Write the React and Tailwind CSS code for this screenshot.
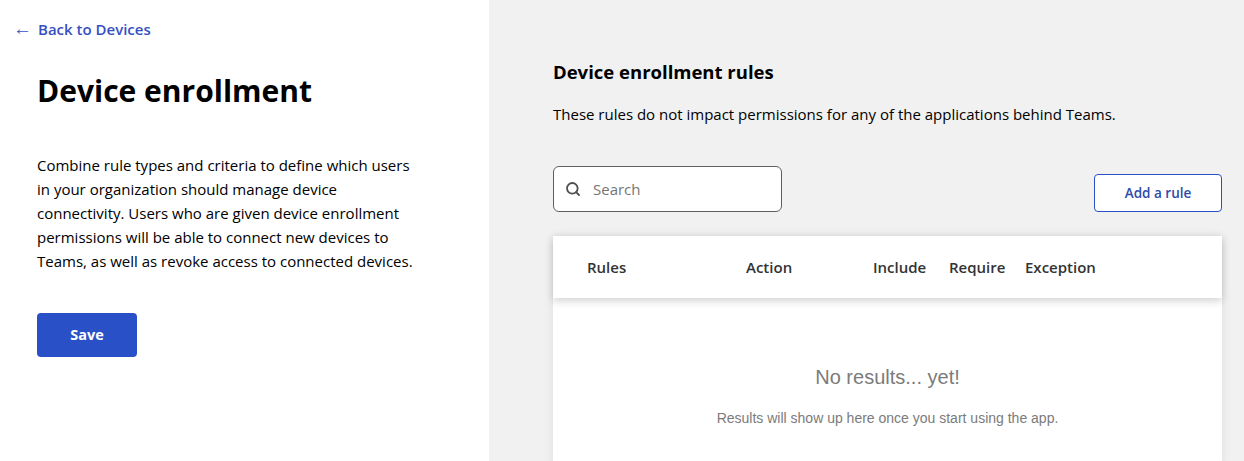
import React from "react";
import { Search } from "lucide-react";

const columns = [
  { name: "Rules", width: "w-[159px]" },
  { name: "Action", width: "w-[127px]" },
  { name: "Include", width: "w-[76px]" },
  { name: "Require", width: "w-[76px]" },
  { name: "Exception", width: "" },
];

const App = () => {
  return (
    <div className="flex h-[461px] overflow-hidden bg-white font-['Open_Sans','Noto_Sans',sans-serif] text-black">
      {/* left panel */}
      <div className="w-[489px] shrink-0 bg-white">
        <a className="flex items-center pl-[13px] pt-[19px] text-[15px] leading-[21px] font-semibold text-[#3650c4]">
          <span className="-mt-0.5 w-[25px] text-[19px] leading-[21px] font-normal">←</span>
          <span>Back to Devices</span>
        </a>
        <div className="pl-[37px]">
          <h1 className="mt-[28px] text-[30px] leading-[46px] font-bold">Device enrollment</h1>
          <p className="mt-[39px] w-[380px] text-[15px] leading-6">
            Combine rule types and criteria to define which users in your organization should manage device connectivity. Users who are given device enrollment permissions will be able to connect new devices to Teams, as well as revoke access to connected devices.
          </p>
          <button className="mt-[40px] h-11 w-[100px] rounded bg-[#2a50c8] text-[14.5px] font-bold text-white">Save</button>
        </div>
      </div>

      {/* right panel */}
      <div className="flex-1 bg-[#f1f1f1] pl-[64px] pr-[22px]">
        <h2 className="mt-[59px] text-[18.5px] leading-[26px] font-bold">Device enrollment rules</h2>
        <p className="mt-[19px] text-[15px] leading-[21px]">These rules do not impact permissions for any of the applications behind Teams.</p>

        <div className="mt-[41px] flex items-end justify-between">
          <div className="flex h-[46px] w-[229px] items-center rounded-md border border-[#5f5f5f] bg-white pl-[11px]">
            <Search size={16} strokeWidth={2.75} className="text-[#505050]" />
            <span className="ml-3 text-[15px] text-[#757575]">Search</span>
          </div>
          <button className="h-[38px] w-[128px] rounded border border-[#2a50c8] bg-white text-[13.5px] font-semibold text-[#2d4ba8]">Add a rule</button>
        </div>

        <div className="mt-6 bg-white shadow-[0_0_10px_rgba(0,0,0,0.08)]">
          <div className="flex h-[62px] items-center pl-[34px] text-[15px] font-semibold text-[#333333] shadow-[0_3px_8px_rgba(0,0,0,0.18)]">
            {columns.map((col) => (
              <div key={col.name} className={col.width}>{col.name}</div>
            ))}
          </div>
          <div className="h-[170px] pt-[64px] text-center font-['Liberation_Sans',sans-serif] text-[#7b7b7b]">
            <div className="text-[20px] leading-[30px]">No results... yet!</div>
            <div className="mt-[16px] text-[14px] leading-[21px]">Results will show up here once you start using the app.</div>
          </div>
        </div>
      </div>
    </div>
  );
};

export default App;
